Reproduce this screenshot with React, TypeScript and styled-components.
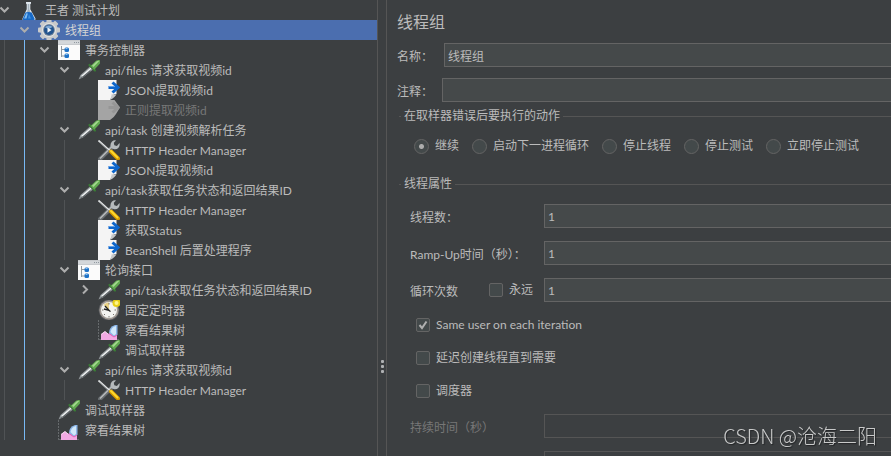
import React from "react";
import styled, { createGlobalStyle, css } from "styled-components";

const colors = {
  background: "#3c3f41",
  text: "#bbbbbb",
  disabled: "#777777",
  selection: "#4b6eaf",
  field: "#45494a",
  border: "#646464",
  line: "#555555",
  guide: "#505355",
  activeGuide: "#78b9f5",
};

const GlobalStyle = createGlobalStyle`
  * { box-sizing: border-box; }
  body {
    margin: 0;
    overflow: hidden;
    background: ${colors.background};
    color: ${colors.text};
    font-family: Lato, "Noto Sans CJK SC", sans-serif;
    font-size: 12px;
    line-height: 20px;
  }
  button, input { font: inherit; color: inherit; }
`;

const Window = styled.main`
  display: grid;
  grid-template-columns: 378px 8px minmax(0, 1fr);
  height: 100vh;
  overflow: hidden;
`;

const TreePane = styled.nav`
  border-right: 1px solid ${colors.line};
  overflow: hidden;
`;

const TreeList = styled.ul`
  list-style: none;
  margin: 0;
  padding: 0;
`;

const TreeRow = styled.li<{ $selected?: boolean; $disabled?: boolean }>`
  display: flex;
  height: 20px;
  line-height: 22px;
  white-space: nowrap;
  color: ${(p) => (p.$disabled ? colors.disabled : colors.text)};
  ${(p) =>
    p.$selected &&
    css`
      background: ${colors.selection};
      color: #d4d4d4;
    `}
`;

const Guide = styled.span<{ $tone: "plain" | "active" | "none" }>`
  flex: 0 0 20px;
  border-left: 1px solid
    ${(p) =>
      p.$tone === "active" ? colors.activeGuide : p.$tone === "plain" ? colors.guide : "transparent"};
`;

const Indent = styled.span`
  display: flex;
  margin-left: 4px;
`;

const Toggle = styled.button`
  display: flex;
  align-items: center;
  width: 12px;
  height: 20px;
  padding: 0;
  margin-left: -5px;
  border: 0;
  background: none;
`;

const ToggleSpace = styled.span`
  width: 12px;
  margin-left: -5px;
`;

const IconBox = styled.span`
  display: flex;
  width: 22px;
  height: 20px;
  margin: 0 5px 0 7px;
`;

const Divider = styled.div`
  display: flex;
  flex-direction: column;
  align-items: center;
  gap: 2px;
  padding-top: 360px;
`;

const Dot = styled.span`
  flex: none;
  width: 3px;
  height: 3px;
  border-radius: 1px;
  background: #afb1b3;
`;

const FormPane = styled.form`
  border-left: 1px solid ${colors.line};
  padding: 10px 0 0 10px;
  overflow: hidden;
  white-space: nowrap;
`;

const Title = styled.h1`
  margin: 0 0 9px;
  font-size: 16px;
  font-weight: 400;
  line-height: 24px;
`;

const Fields = styled.div`
  display: flex;
  flex-direction: column;
  gap: 11px;
  padding-bottom: 4px;
`;

const Field = styled.div`
  display: flex;
  align-items: center;
  height: 24px;
`;

const FieldLabel = styled.label<{ $width: number; $disabled?: boolean }>`
  flex: 0 0 ${(p) => p.$width}px;
  padding-top: 3px;
  color: ${(p) => (p.$disabled ? colors.disabled : "inherit")};
`;

const TextInput = styled.input`
  flex: 1;
  min-width: 0;
  height: 24px;
  padding: 1px 3px 0;
  border: 1px solid ${colors.border};
  border-right: 0;
  border-radius: 0;
  outline: 0;
  background: ${colors.field};
  &:disabled {
    background: ${colors.background};
    border-color: ${colors.line};
  }
`;

const Group = styled.fieldset`
  margin: 0 0 0 2px;
  padding: 0;
  border: 0;
  min-width: 0;
`;

const Legend = styled.legend`
  display: flex;
  align-items: center;
  gap: 3px;
  width: 100%;
  height: 20px;
  padding: 0;
  &::before, &::after {
    content: "";
    height: 1px;
    background: ${colors.line};
  }
  &::before { width: 2px; }
  &::after { flex: 1; }
`;

const RadioRow = styled.div`
  display: flex;
  gap: 13px;
  padding: 10px 0 18px 15px;
`;

const Choice = styled.label`
  display: flex;
  align-items: center;
  gap: 6px;
`;

const Radio = styled.input`
  appearance: none;
  width: 15px;
  height: 15px;
  margin: 0;
  border: 1px solid ${colors.border};
  border-radius: 50%;
  background: #43494a;
  &:checked {
    background: radial-gradient(circle, #adadad 2px, #43494a 3px);
  }
`;

const Check = styled.input`
  appearance: none;
  width: 14px;
  height: 14px;
  margin: 0;
  border: 1px solid ${colors.border};
  border-radius: 2px;
  background: #43494a;
`;

const CheckWrap = styled.span`
  display: grid;
  place-items: center;
  & > * { grid-area: 1 / 1; }
  svg { pointer-events: none; }
`;

const Properties = styled.div`
  display: flex;
  flex-direction: column;
  gap: 13px;
  padding: 10px 0 0 11px;
`;

const PropertyRow = styled.div`
  display: flex;
  align-items: center;
  height: 24px;
`;

const Options = styled.div`
  display: flex;
  flex-direction: column;
  gap: 13px;
  padding: 0 0 0 6px;
`;

const ForeverCell = styled.div`
  flex: 0 0 55px;
`;

const Watermark = styled.div`
  position: fixed;
  right: 14px;
  bottom: 6px;
  color: #c8c9c9;
  font-family: "Noto Sans CJK SC", sans-serif;
  font-weight: 300;
  font-size: 20px;
  line-height: 28px;
  text-shadow: 1px 1px 1px #222426;
`;

type IconName = "flask" | "gear" | "controller" | "pipette" | "page" | "pageOff" | "tools" | "clock" | "chart";

const drawings: Record<IconName, React.ReactNode> = {
  flask: (
    <>
      <path d="M8 2h5v1.500l-.7.700v5L17.500 18.500q.4 1.500-1 1.500H5.500q-1.600 0-1-1.500L8.700 9.200v-5L8 3.500z" fill="#dfe7ee" />
      <path d="M9.700 4v5.700L8.500 13h4L11.300 9V4z" fill="#a5b2bd" />
      <path d="M7.500 12.500q3-1 6.200 0l3 6.500q0 1-1 1H5.500q-1 0-.8-1z" fill="#1769c6" />
      <path d="M8.300 13.200L6 18.500h2.500l1.300-5z" fill="#82bdf1" />
      <path d="M11 14l2 4.500h-3z" fill="#3c8fe0" />
    </>
  ),
  gear: (
    <>
      <g fill="#c9cacb">
        {[0, 45, 90, 135].map((a) => (
          <rect key={a} x="8.500" y="-1" width="5" height="22" rx="1" transform={`rotate(${a} 11 10)`} />
        ))}
        <circle cx="11" cy="10" r="8.800" />
      </g>
      <circle cx="11" cy="10" r="7" fill="#e2e3e4" />
      <circle cx="11" cy="10" r="5.900" fill="#75869b" />
      <circle cx="11" cy="10" r="5" fill="#23548f" />
      <path d="M7 7.500a5 5 0 0 1 7.500-.5L11 9z" fill="#7da6d2" />
      <path d="M9.500 7.500l4 2.500-4 2.700z" fill="#f5f8fb" />
    </>
  ),
  controller: (
    <>
      <rect width="22" height="20" fill="#fbfbfb" />
      <rect width="22" height="4" fill="#d4d7da" />
      <path d="M0 .5h22M0 4.500h22" stroke="#c8cbce" />
      <path d="M16 2.500h1M18 2.500h1M20 2.500h1" stroke="#8f979e" />
      <path d="M3.500 6v11M3.500 9.500H7M3.500 16H7" stroke="#9199a0" fill="none" />
      <rect x="6.500" y="7.500" width="4.500" height="4.500" rx="1.500" fill="#1f73c8" />
      <rect x="6.500" y="13.500" width="4.500" height="4.500" rx="1.500" fill="#1f73c8" />
      <path d="M7.500 8.500h2M7.500 14.500h2" stroke="#8cc1f0" />
    </>
  ),
  pipette: (
    <>
      <path d="M.5 19.500L2.500 15 12 6.500l3 3L5 17.500z" fill="#969c9f" />
      <path d="M3 16L12.500 7.700l1 .9L4.500 16.800z" fill="#f2f4f4" />
      <path d="M1 19L4.500 16.500 12 10.500l1 .5-7.500 6z" fill="#5c6164" />
      <path d="M11.500 5l5.500 5.500" stroke="#3a7b34" strokeWidth="2.200" strokeLinecap="round" />
      <path d="M12.500 6L18 .8q2.500-1.300 4-.5t0 3.200L16.300 9.700z" fill="#62a951" />
      <path d="M14 5.700l4.500-4.200q1.500-.8 2.700-.6L15.500 7z" fill="#a5da91" />
    </>
  ),
  page: (
    <>
      <path d="M0 0h18.500v14q-2 0-3.500 1-1.500 2-3 5H0z" fill="#f4f4f4" />
      <path d="M12 20q1.500-3.500 1.800-6 2.200 1 4.700 0-1.500 3.500-6.500 6z" fill="#c5c7c8" />
      <path d="M10.500 7.500H19M14.500 2.500l5.500 5-5.500 5" fill="none" stroke="#0c65cb" strokeWidth="3" />
      <path d="M11 6.500H17" stroke="#5da0eb" />
    </>
  ),
  pageOff: (
    <>
      <path d="M0 0h16.500l5.500 7.500-4 6.500q-1.500 3-6 6H0z" fill="#a4a4a4" />
      <path d="M10.500 7.500H19M14.500 2.500l5.500 5-5.500 5" fill="none" stroke="#969696" strokeWidth="3" />
    </>
  ),
  tools: (
    <>
      <path d="M2 19L14.500 6.800" stroke="#696e71" strokeWidth="4" strokeLinecap="round" />
      <path d="M2 18.500L14.500 6" stroke="#b8bcbe" strokeWidth="1.500" />
      <path d="M13 8q-1.500-4 1-6.500Q16-.2 18 .4L15.800 2.800l.5 2.500 2.600.6L21.500 3q.7 3-1.200 5-2.400 2-5.300.7z" fill="#b5b9bb" />
      <path d="M.5.500L12 11" stroke="#e5e7e8" strokeWidth="1.700" />
      <path d="M1.500 2.300L11 11" stroke="#777c7f" strokeWidth=".8" />
      <path d="M13 11.500l7 7" stroke="#d79a00" strokeWidth="4" strokeLinecap="round" />
      <path d="M13 11l6.500 6.500" stroke="#ffd82e" strokeWidth="2" strokeLinecap="round" />
    </>
  ),
  clock: (
    <>
      <circle cx="11" cy="10" r="10.500" fill="#55575b" />
      <circle cx="11" cy="10" r="9.700" fill="#a09993" />
      <circle cx="11" cy="10" r="8" fill="#f3f3f0" />
      <path d="M11 10L5.500 5Q8 2 11 2.500z" fill="#ead185" />
      <path d="M7 6l4 4.300L6 9M11 10.500l1.500 1" stroke="#222" strokeWidth="1.300" fill="none" />
      <path d="M11 3v1.500M11 16v1.500M4 10h1.500M16.500 10H18M6 15l1-1M16 15l-1-1" stroke="#77736f" />
      <circle cx="18.500" cy="3" r="4" fill="#e7cf18" />
      <circle cx="18.500" cy="3" r="2" fill="#fff587" />
    </>
  ),
  chart: (
    <>
      <path d="M.5 0v20M1 19.500h20" stroke="#666a6c" strokeDasharray="2 1" />
      <path d="M3 20v-5.500l4-3 3 2.500 3-2 6 3V20z" fill="#f2a9e4" />
      <path d="M3 14.500L7 11.500l3 2.500" stroke="#f9dff5" fill="none" />
      <path d="M11 13q0-6 6-8h2.500v10l-3 2-5.500-3z" fill="#8cb6e8" />
      <path d="M12.500 12q1-5 5.500-6v8l-2 1.500z" fill="#d2e8fa" />
      <path d="M11 13.500l5 3.500 3-2" stroke="#f15bb4" fill="none" />
    </>
  ),
};

function NodeIcon({ name }: { name: IconName }) {
  return (
    <IconBox aria-hidden="true">
      <svg width="22" height="20" viewBox="0 0 22 20">{drawings[name]}</svg>
    </IconBox>
  );
}

function Chevron({ open }: { open: boolean }) {
  return (
    <svg width="12" height="12" viewBox="0 0 12 12" aria-hidden="true">
      <path
        d={open ? "M1.500 3.500L5.500 7.500 9.500 3.500" : "M4 1.500L8 5.500 4 9.500"}
        fill="none"
        stroke="#adadad"
        strokeWidth="2"
      />
    </svg>
  );
}

interface TreeNode {
  depth: number;
  icon: IconName;
  label: string;
  state?: "open" | "closed";
  selected?: boolean;
  disabled?: boolean;
}

const nodes: TreeNode[] = [
  { depth: 0, icon: "flask", label: "王者 测试计划", state: "open" },
  { depth: 1, icon: "gear", label: "线程组", state: "open", selected: true },
  { depth: 2, icon: "controller", label: "事务控制器", state: "open" },
  { depth: 3, icon: "pipette", label: "api/files 请求获取视频id", state: "open" },
  { depth: 4, icon: "page", label: "JSON提取视频id" },
  { depth: 4, icon: "pageOff", label: "正则提取视频id", disabled: true },
  { depth: 3, icon: "pipette", label: "api/task 创建视频解析任务", state: "open" },
  { depth: 4, icon: "tools", label: "HTTP Header Manager" },
  { depth: 4, icon: "page", label: "JSON提取视频id" },
  { depth: 3, icon: "pipette", label: "api/task获取任务状态和返回结果ID", state: "open" },
  { depth: 4, icon: "tools", label: "HTTP Header Manager" },
  { depth: 4, icon: "page", label: "获取Status" },
  { depth: 4, icon: "page", label: "BeanShell 后置处理程序" },
  { depth: 3, icon: "controller", label: "轮询接口", state: "open" },
  { depth: 4, icon: "pipette", label: "api/task获取任务状态和返回结果ID", state: "closed" },
  { depth: 4, icon: "clock", label: "固定定时器" },
  { depth: 4, icon: "chart", label: "察看结果树" },
  { depth: 4, icon: "pipette", label: "调试取样器" },
  { depth: 3, icon: "pipette", label: "api/files 请求获取视频id", state: "open" },
  { depth: 4, icon: "tools", label: "HTTP Header Manager" },
  { depth: 2, icon: "pipette", label: "调试取样器" },
  { depth: 2, icon: "chart", label: "察看结果树" },
];

function TreeItem({ node }: { node: TreeNode }) {
  const tone = (level: number) => (node.selected ? "none" : level === 1 ? "active" : "plain");
  return (
    <TreeRow $selected={node.selected} $disabled={node.disabled}>
      <Indent>
        {Array.from({ length: node.depth }, (_, level) => (
          <Guide key={level} $tone={tone(level)} />
        ))}
      </Indent>
      {node.state ? (
        <Toggle type="button" aria-label={node.label} aria-expanded={node.state === "open"}>
          <Chevron open={node.state === "open"} />
        </Toggle>
      ) : (
        <ToggleSpace />
      )}
      <NodeIcon name={node.icon} />
      {node.label}
    </TreeRow>
  );
}

function CheckChoice({ label, checked }: { label: string; checked?: boolean }) {
  const [on, setOn] = React.useState(Boolean(checked));
  return (
    <Choice>
      <CheckWrap>
        <Check type="checkbox" checked={on} onChange={(e) => setOn(e.target.checked)} />
        {on && (
          <svg width="10" height="10" viewBox="0 0 10 10" aria-hidden="true">
            <path d="M1.500 5L4 8 8.500 1.500" fill="none" stroke="#b0b0b0" strokeWidth="2" />
          </svg>
        )}
      </CheckWrap>
      {label}
    </Choice>
  );
}

const errorActions = ["继续", "启动下一进程循环", "停止线程", "停止测试", "立即停止测试"];

export default function App() {
  return (
    <>
      <GlobalStyle />
      <Window>
        <TreePane>
          <TreeList>
            {nodes.map((node, i) => (
              <TreeItem key={i} node={node} />
            ))}
          </TreeList>
        </TreePane>
        <Divider>
          <Dot />
          <Dot />
          <Dot />
        </Divider>
        <FormPane>
          <Title>线程组</Title>
          <Fields>
            <Field>
              <FieldLabel $width={47} htmlFor="name">名称：</FieldLabel>
              <TextInput id="name" defaultValue="线程组" />
            </Field>
            <Field>
              <FieldLabel $width={45} htmlFor="comment">注释：</FieldLabel>
              <TextInput id="comment" />
            </Field>
          </Fields>
          <Group>
            <Legend>在取样器错误后要执行的动作</Legend>
            <RadioRow>
              {errorActions.map((action, i) => (
                <Choice key={action}>
                  <Radio type="radio" name="on-error" defaultChecked={i === 0} />
                  {action}
                </Choice>
              ))}
            </RadioRow>
          </Group>
          <Group>
            <Legend>线程属性</Legend>
            <Properties>
              <PropertyRow>
                <FieldLabel $width={134} htmlFor="threads">线程数：</FieldLabel>
                <TextInput id="threads" defaultValue="1" />
              </PropertyRow>
              <PropertyRow>
                <FieldLabel $width={134} htmlFor="ramp">Ramp-Up时间（秒）：</FieldLabel>
                <TextInput id="ramp" defaultValue="1" />
              </PropertyRow>
              <PropertyRow>
                <FieldLabel $width={79} htmlFor="loops">循环次数</FieldLabel>
                <ForeverCell>
                  <CheckChoice label="永远" />
                </ForeverCell>
                <TextInput id="loops" defaultValue="1" />
              </PropertyRow>
              <Options>
                <CheckChoice label="Same user on each iteration" checked />
                <CheckChoice label="延迟创建线程直到需要" />
                <CheckChoice label="调度器" />
              </Options>
              <PropertyRow>
                <FieldLabel $width={134} $disabled htmlFor="duration">持续时间（秒）</FieldLabel>
                <TextInput id="duration" disabled />
              </PropertyRow>
              <PropertyRow>
                <FieldLabel as="span" $width={134} $disabled />
                <TextInput aria-label="启动延迟（秒）" disabled />
              </PropertyRow>
            </Properties>
          </Group>
        </FormPane>
      </Window>
      <Watermark>CSDN @沧海二阳</Watermark>
    </>
  );
}
